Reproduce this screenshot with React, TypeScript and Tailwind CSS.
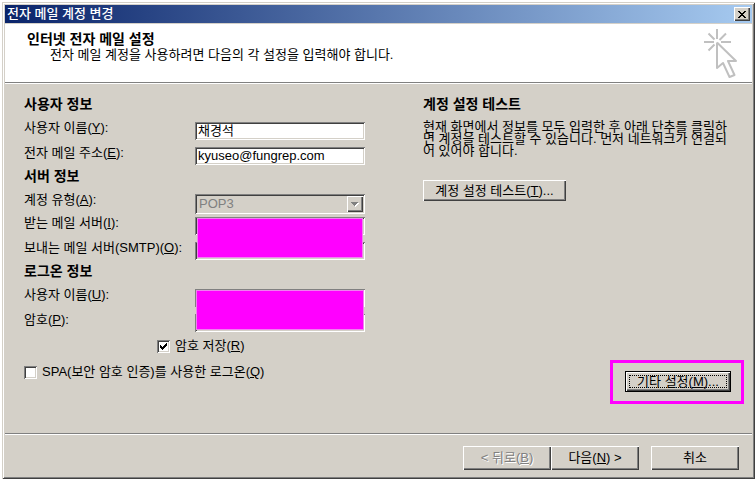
import type { ReactNode } from 'react'
import clsx from 'clsx'

const RAISED =
  'bg-[#d4d0c8] shadow-[inset_1px_1px_0_#fff,inset_-1px_-1px_0_#404040,inset_-2px_-2px_0_#808080]'
const SUNKEN =
  'shadow-[inset_1px_1px_0_#808080,inset_-1px_-1px_0_#fff,inset_2px_2px_0_#404040,inset_-2px_-2px_0_#d4d0c8]'

function DialogButton({ className, disabled, children }: { className?: string; disabled?: boolean; children: ReactNode }) {
  return (
    <button
      type="button"
      disabled={disabled}
      className={clsx(
        'flex items-center justify-center whitespace-nowrap',
        RAISED,
        disabled && 'text-[#808080] [text-shadow:1px_1px_0_#fff]',
        className,
      )}
    >
      {children}
    </button>
  )
}

function Section({ title, children }: { title: string; children: ReactNode }) {
  return (
    <section>
      <h2 className="mb-[6px] text-[14px] leading-[18px] font-bold">{title}</h2>
      {children}
    </section>
  )
}

interface FieldProps { id: string; label: string; accessKey: string; children: ReactNode }

function Field({ id, label, accessKey, children }: FieldProps) {
  return (
    <div className="flex h-[21px]">
      <label htmlFor={id} className="w-[171px] shrink-0 whitespace-nowrap">
        {label}(<u>{accessKey}</u>):
      </label>
      <div className="relative mt-[3px] w-[170px]">{children}</div>
    </div>
  )
}

function TextInput({ id, value, type = 'text' }: { id: string; value?: string; type?: string }) {
  return (
    <input
      id={id}
      type={type}
      defaultValue={value}
      className={clsx('block h-[18px] w-full bg-white px-[3px] outline-none', SUNKEN)}
    />
  )
}

function CheckBox({ id, checked, children }: { id: string; checked?: boolean; children: ReactNode }) {
  return (
    <div className="flex items-center gap-[5px]">
      <span className="relative flex">
        <input
          id={id}
          type="checkbox"
          defaultChecked={checked}
          className={clsx('peer size-[13px] appearance-none bg-white', SUNKEN)}
        />
        <svg
          viewBox="0 0 13 13"
          shapeRendering="crispEdges"
          className="pointer-events-none absolute inset-0 hidden size-[13px] peer-checked:block"
        >
          <path d="M3 5h1v1h1v1h1v-1h1v-1h1v-1h1v-1h1v3h-1v1h-1v1h-1v1h-1v1h-1v-1h-1v-1h-1z" />
        </svg>
      </span>
      <label htmlFor={id}>{children}</label>
    </div>
  )
}

function WizardIcon() {
  return (
    <svg width="34" height="50" viewBox="0 0 34 50" fill="none" stroke="#c0c0c0" strokeWidth="2">
      <path d="M13 0v10M0 13h10M17 13h10" />
      <path d="M4.500 4.500l6 6M22 4.500l-6.500 6.500M4.500 21.500l6-6" />
      <path strokeLinejoin="round" d="M13 13.500V39L19 34L25.500 48L30.500 46L24 32H32L13 13.500" />
    </svg>
  )
}

export default function App() {
  return (
    <div className="bg-white pt-[2px] pr-px pb-[2px] pl-[2px] font-['Liberation_Sans','Noto_Sans_CJK_KR',sans-serif] text-[13px] leading-[18px] text-black">
      <div className="bg-[#d4d0c8] p-[3px] shadow-[inset_1px_1px_0_#d4d0c8,inset_-1px_-1px_0_#404040,inset_2px_2px_0_#fff,inset_-2px_-2px_0_#808080]">
        <div className="mb-px flex h-[18px] items-center justify-between bg-linear-to-r/srgb from-[#0a246a] to-[#a6caf0] pr-[2px] pl-[2px]">
          <h1 className="font-medium text-white">전자 메일 계정 변경</h1>
          <button type="button" aria-label="닫기" className={clsx('flex h-[14px] w-[16px] items-center justify-center', RAISED)}>
            <svg width="8" height="7" viewBox="0 0 8 7" shapeRendering="crispEdges">
              <path d="M0 0h2v1h1v1h2v-1h1v-1h2v1h-1v1h-1v1h-1v1h1v1h1v1h1v1h-2v-1h-1v-1h-2v1h-1v1h-2v-1h1v-1h1v-1h1v-1h-1v-1h-1v-1h-1z" />
            </svg>
          </button>
        </div>

        <header className="flex h-[60px] justify-between border-b border-white bg-white pr-[14px] pl-[22px] shadow-[inset_0_-1px_0_#808080]">
          <div className="pt-[7px]">
            <h2 className="text-[14px] leading-[16px] font-bold">인터넷 전자 메일 설정</h2>
            <p className="pl-[23px] leading-[16px]">전자 메일 계정을 사용하려면 다음의 각 설정을 입력해야 합니다.</p>
          </div>
          <div className="pt-[5px]">
            <WizardIcon />
          </div>
        </header>

        <main className="flex gap-[58px] pt-[11px] pr-[8px] pb-[29px] pl-[19px]">
          <form className="flex w-[341px] shrink-0 flex-col gap-[2px] pb-[23px]">
            <Section title="사용자 정보">
              <div className="flex flex-col gap-1">
                <Field id="name" label="사용자 이름" accessKey="Y">
                  <TextInput id="name" value="채경석" />
                </Field>
                <Field id="email" label="전자 메일 주소" accessKey="E">
                  <TextInput id="email" value="kyuseo@fungrep.com" />
                </Field>
              </div>
            </Section>

            <Section title="서버 정보">
              <div className="mb-[2px]">
                <Field id="type" label="계정 유형" accessKey="A">
                  <select
                    id="type"
                    disabled
                    className={clsx('block h-[20px] w-full appearance-none bg-[#d4d0c8] px-[4px] leading-[16px] text-[#808080] opacity-100', SUNKEN)}
                  >
                    <option>POP3</option>
                  </select>
                  <span className={clsx('pointer-events-none absolute top-[2px] right-[2px] flex size-[16px] items-center justify-center', RAISED)}>
                    <svg width="8" height="5" viewBox="0 0 8 5" shapeRendering="crispEdges">
                      <path fill="#fff" d="M1 1h7v1h-1v1h-1v1h-1v1h-1v-1h-1v-1h-1v-1h-1z" />
                      <path fill="#808080" d="M0 0h7v1h-1v1h-1v1h-1v1h-1v-1h-1v-1h-1v-1h-1z" />
                    </svg>
                  </span>
                </Field>
              </div>
              <div className="relative flex flex-col gap-1">
                <Field id="incoming" label="받는 메일 서버" accessKey="I">
                  <TextInput id="incoming" />
                </Field>
                <Field id="outgoing" label="보내는 메일 서버(SMTP)" accessKey="O">
                  <TextInput id="outgoing" />
                </Field>
                <div className="absolute right-[2px] bottom-[2px] h-[40px] w-[166px] border border-[#f080f0] bg-[#ff00ff]" />
              </div>
            </Section>

            <Section title="로그온 정보">
              <div className="relative flex flex-col gap-1">
                <Field id="user" label="사용자 이름" accessKey="U">
                  <TextInput id="user" />
                </Field>
                <Field id="password" label="암호" accessKey="P">
                  <TextInput id="password" type="password" />
                </Field>
                <div className="absolute right-px bottom-[2px] h-[40px] w-[168px] border border-[#f080f0] bg-[#ff00ff]" />
              </div>
              <div className="mt-[5px] flex flex-col gap-2">
                <div className="pl-[133px]">
                  <CheckBox id="save" checked>
                    암호 저장(<u>R</u>)
                  </CheckBox>
                </div>
                <CheckBox id="spa">
                  SPA(보안 암호 인증)를 사용한 로그온(<u>Q</u>)
                </CheckBox>
              </div>
            </Section>
          </form>

          <div className="flex flex-1 flex-col justify-between">
            <section>
              <h2 className="mb-2 text-[14px] leading-[18px] font-bold">계정 설정 테스트</h2>
              <p className="mb-[23px] max-w-[310px] leading-[12px]">
                현재 화면에서 정보를 모두 입력한 후 아래 단추를 클릭하면 계정을 테스트할 수 있습니다. 먼저 네트워크가 연결되어 있어야 합니다.
              </p>
              <DialogButton className="h-[21px] w-[143px]">
                <span>계정 설정 테스트(<u>T</u>)...</span>
              </DialogButton>
            </section>

            {/* highlighted call-out */}
            <div className="self-end border-3 border-[#ff00ff] pt-[8px] pr-[10px] pb-[9px] pl-[12px]">
              <div className="border border-black">
                <DialogButton className="h-[19px] w-[104px] p-[3px]">
                  <span className="flex h-[13px] w-full items-center justify-center border border-dotted border-black">
                    <span>기타 설정(<u>M</u>)...</span>
                  </span>
                </DialogButton>
              </div>
            </div>
          </div>
        </main>

        <footer className="flex justify-end gap-3 border-t border-[#808080] pt-[12px] pr-[13px] pb-[6px] shadow-[inset_0_1px_0_#fff]">
          <div className="flex">
            <DialogButton disabled className="h-[24px] w-[88px]">
              <span>&lt; 뒤로(<u>B</u>)</span>
            </DialogButton>
            <DialogButton className="h-[24px] w-[88px]">
              <span>다음(<u>N</u>) &gt;</span>
            </DialogButton>
          </div>
          <DialogButton className="h-[24px] w-[88px]">취소</DialogButton>
        </footer>
      </div>
    </div>
  )
}
